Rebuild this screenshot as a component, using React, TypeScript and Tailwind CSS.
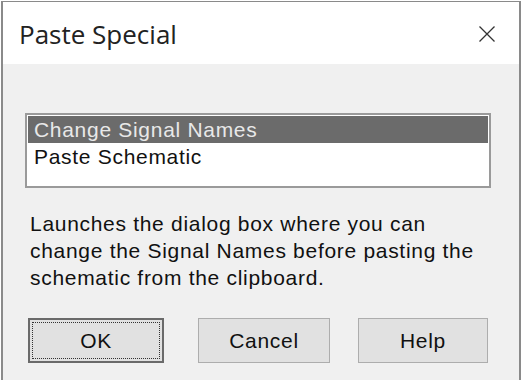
import React from "react";

export default function App() {
  const body = { fontFamily: '"Liberation Sans", Arial, sans-serif' };
  return (
    <div className="w-[522px] h-[380px] bg-white overflow-hidden">
      <div className="w-[520px] h-[381px] ml-[1px] mt-[1px] border-l-2 border-t border-r-2 border-[#8a8a8a] flex flex-col bg-[#f0f0f0]">
        <div className="h-[62px] bg-white flex items-center justify-between pl-[16px] pr-[23px]">
          <span
            className="text-[26px] text-[#222] leading-none mt-[2px]"
            style={{ fontFamily: '"Open Sans", "Noto Sans", sans-serif' }}
          >
            Paste Special
          </span>
          <svg width="18" height="18" viewBox="0 0 18 18" className="mt-[1px]">
            <path d="M1.5 1.5 L16.5 16.5 M16.5 1.5 L1.5 16.5" stroke="#333" strokeWidth="1.3" fill="none" />
          </svg>
        </div>
        <div className="flex flex-col pl-[22px] pr-[28px] tracking-[0.7px]" style={body}>
          <div className="mt-[49px] h-[75px] border-2 border-[#9a9a9a] bg-white p-[1px]">
            <div className="h-[27px] bg-[#6b6b6b] text-[#e8e8e8] text-[21px] leading-[27px] pl-[6px]">
              Change Signal Names
            </div>
            <div className="h-[27px] text-[#111] text-[21px] leading-[27px] pl-[6px]">
              Paste Schematic
            </div>
          </div>
          <p className="mt-[22px] pl-[5px] text-[21px] leading-[27px] text-[#111] whitespace-nowrap">
            Launches the dialog box where you can
            <br />
            change the Signal Names before pasting the
            <br />
            schematic from the clipboard.
          </p>
          <div className="mt-[27px] flex items-center pl-[3px] gap-[34px]">
            <button className="w-[136px] h-[45px] border-2 border-[#6a6a6a] bg-[#e1e1e1] p-[2px] text-[21px] text-[#111] tracking-[0.7px]">
              <div className="w-full h-full border border-dotted border-[#333] flex items-center justify-center">
                OK
              </div>
            </button>
            <button className="w-[132px] h-[45px] border border-[#adadad] bg-[#e1e1e1] text-[21px] text-[#111] tracking-[0.7px] flex items-center justify-center">
              Cancel
            </button>
            <button className="w-[130px] h-[45px] border border-[#adadad] bg-[#e1e1e1] text-[21px] text-[#111] tracking-[0.7px] flex items-center justify-center ml-[-6px]">
              Help
            </button>
          </div>
        </div>
      </div>
    </div>
  );
}
